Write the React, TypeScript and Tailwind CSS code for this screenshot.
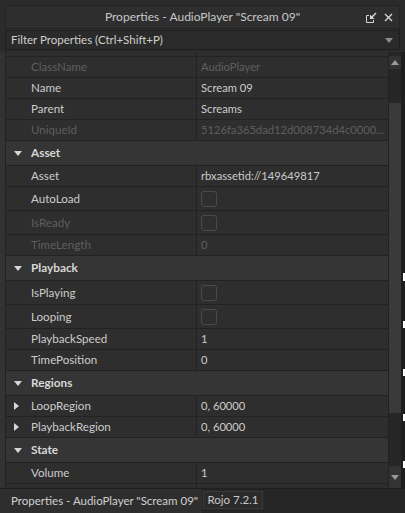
import React from "react";

type Row =
  | { kind: "header"; label: string }
  | { kind: "prop"; label: string; value?: string; disabled?: boolean; check?: boolean; expand?: boolean };

const rows: Row[] = [
  { kind: "prop", label: "ClassName", value: "AudioPlayer", disabled: true },
  { kind: "prop", label: "Name", value: "Scream 09" },
  { kind: "prop", label: "Parent", value: "Screams" },
  { kind: "prop", label: "UniqueId", value: "5126fa365dad12d008734d4c0000...", disabled: true },
  { kind: "header", label: "Asset" },
  { kind: "prop", label: "Asset", value: "rbxassetid://149649817" },
  { kind: "prop", label: "AutoLoad", check: true },
  { kind: "prop", label: "IsReady", check: true, disabled: true },
  { kind: "prop", label: "TimeLength", value: "0", disabled: true },
  { kind: "header", label: "Playback" },
  { kind: "prop", label: "IsPlaying", check: true },
  { kind: "prop", label: "Looping", check: true },
  { kind: "prop", label: "PlaybackSpeed", value: "1" },
  { kind: "prop", label: "TimePosition", value: "0" },
  { kind: "header", label: "Regions" },
  { kind: "prop", label: "LoopRegion", value: "0, 60000", expand: true },
  { kind: "prop", label: "PlaybackRegion", value: "0, 60000", expand: true },
  { kind: "header", label: "State" },
  { kind: "prop", label: "Volume", value: "1" },
];

function DownTri({ cls = "" }: { cls?: string }) {
  return (
    <svg width="8" height="5" viewBox="0 0 8 5" className={cls}>
      <path d="M0 0 H8 L4 5 Z" fill="currentColor" />
    </svg>
  );
}

function RightTri() {
  return (
    <svg width="5" height="8" viewBox="0 0 5 8">
      <path d="M0 0 L5 4 L0 8 Z" fill="#d6d6d6" />
    </svg>
  );
}

export default function App() {
  return (
    <div
      className="w-[405px] h-[513px] bg-[#2b2b2b] flex flex-col overflow-hidden text-[11.6px] text-[#cccccc] whitespace-nowrap"
      style={{ fontFamily: "Lato, 'Noto Sans', sans-serif" }}
    >
      <div className="h-[5px] shrink-0 bg-[#2b2b2b]" />
      {/* title bar */}
      <div className="shrink-0 mx-[5px] w-[395px] h-[24px] border border-[#232323] bg-[#2e2e2e] flex items-center relative">
        <div className="flex-1 text-center text-[12px] text-[#c8c8c8]">Properties - AudioPlayer "Scream 09"</div>
        <div className="absolute right-[6px] top-[6px] flex items-center gap-[7px]">
          <svg width="11" height="11" viewBox="0 0 11 11">
            <path d="M0.5 3.5 V10.5 H7.5 V8" stroke="#d8d8d8" fill="none" />
            <path d="M0.5 3.5 H3" stroke="#d8d8d8" fill="none" />
            <path d="M10 1 L5 6" stroke="#d8d8d8" strokeWidth="1.4" />
            <path d="M4 2.5 V7 H8.5 Z" fill="#d8d8d8" />
          </svg>
          <svg width="9" height="9" viewBox="0 0 9 9">
            <path d="M1 1 L8 8 M8 1 L1 8" stroke="#d8d8d8" strokeWidth="1.3" />
          </svg>
        </div>
      </div>
      {/* filter */}
      <div className="shrink-0 mx-[5px] mt-[1px] w-[395px] h-[20px] border border-[#1f1f1f] bg-[#2a2a2a] flex items-center px-[5px]">
        <div className="flex-1 text-[11.5px] text-[#cfcfcf]">Filter Properties (Ctrl+Shift+P)</div>
        <DownTri cls="text-[#8a8a8a] mr-[1px]" />
      </div>
      <div className="h-[2px] shrink-0" />
      {/* grid */}
      <div className="flex h-[436px] shrink-0">
        <div className="w-[5px] bg-[#333333]" />
        <div className="w-[383px] flex flex-col overflow-hidden border-l border-[#222222] bg-[#2e2e2e]">
          <div className="h-[5px] shrink-0 border-b border-[#222222] flex">
            <div className="w-[191px] border-r border-[#222222]" />
          </div>
          {rows.map((r, i) =>
            r.kind === "header" ? (
              <div key={i} className="h-[25px] shrink-0 bg-[#353535] border-b border-[#222222] flex items-center">
                <div className="w-[25px] pl-[8px] flex items-center">
                  <DownTri cls="text-[#d6d6d6]" />
                </div>
                <span className="font-bold text-[11.8px] text-[#d8d8d8]">{r.label}</span>
              </div>
            ) : (
              <div
                key={i}
                className={`${r.check ? "h-[24px]" : "h-[21px]"} shrink-0 border-b border-[#222222] flex`}
              >
                <div className="w-[191px] border-r border-[#222222] flex items-center">
                  <div className="w-[25px] pl-[8px] flex items-center">{r.expand ? <RightTri /> : null}</div>
                  <span className={r.disabled ? "text-[#5e5e5e]" : "text-[#cccccc]"}>{r.label}</span>
                </div>
                <div className="flex-1 flex items-center pl-[4px] min-w-0 text-[11.2px]">
                  {r.check ? (
                    <div className="w-[16px] h-[16px] rounded-[3px] border border-[#4a4a4a]" />
                  ) : (
                    <span className={r.disabled ? "text-[#5e5e5e]" : "text-[#cccccc]"}>{r.value}</span>
                  )}
                </div>
              </div>
            )
          )}
          <div className="h-[4px] shrink-0 flex">
            <div className="w-[191px] border-r border-[#222222]" />
          </div>
        </div>
        {/* scrollbar */}
        <div className="w-[13px] flex flex-col bg-[#262626] border-l border-[#222222]">
          <div className="h-[4px] shrink-0" />
          <div className="h-[13px] shrink-0 bg-[#333333] flex items-center justify-center">
            <DownTri cls="text-[#9a9a9a] rotate-180" />
          </div>
          <div className="h-[34px] shrink-0" />
          <div className="h-[310px] shrink-0 bg-[#3a3a3a]" />
          <div className="flex-1" />
          <div className="h-[22px] shrink-0 bg-[#333333] flex items-center justify-center">
            <DownTri cls="text-[#9a9a9a]" />
          </div>
        </div>
        <div className="w-[4px] bg-[#1e1e1e] relative">
          <div className="absolute right-0 top-[221px] w-[2px] h-[8px] bg-white" />
          <div className="absolute right-0 top-[269px] w-[2px] h-[7px] bg-white" />
          <div className="absolute right-0 top-[317px] w-[2px] h-[7px] bg-white" />
          <div className="absolute right-0 top-[362px] w-[2px] h-[7px] bg-white" />
          <div className="absolute right-0 top-[409px] w-[2px] h-[7px] bg-white" />
        </div>
      </div>
      {/* status bar */}
      <div className="flex-1 min-h-0 flex items-stretch bg-[#262626] border-t border-[#1f1f1f]">
        <div className="w-[202px] bg-[#2e2e2e] flex items-center pl-[11px] text-[11.5px] text-[#d0d0d0]">
          Properties - AudioPlayer "Scream 09"
        </div>
        <div className="mt-[2px] mb-[4px] ml-[1px] w-[60px] border border-[#3a3a3a] bg-[#2b2b2b] flex items-center justify-center text-[11.5px] text-[#c8c8c8]">
          Rojo 7.2.1
        </div>
      </div>
    </div>
  );
}
